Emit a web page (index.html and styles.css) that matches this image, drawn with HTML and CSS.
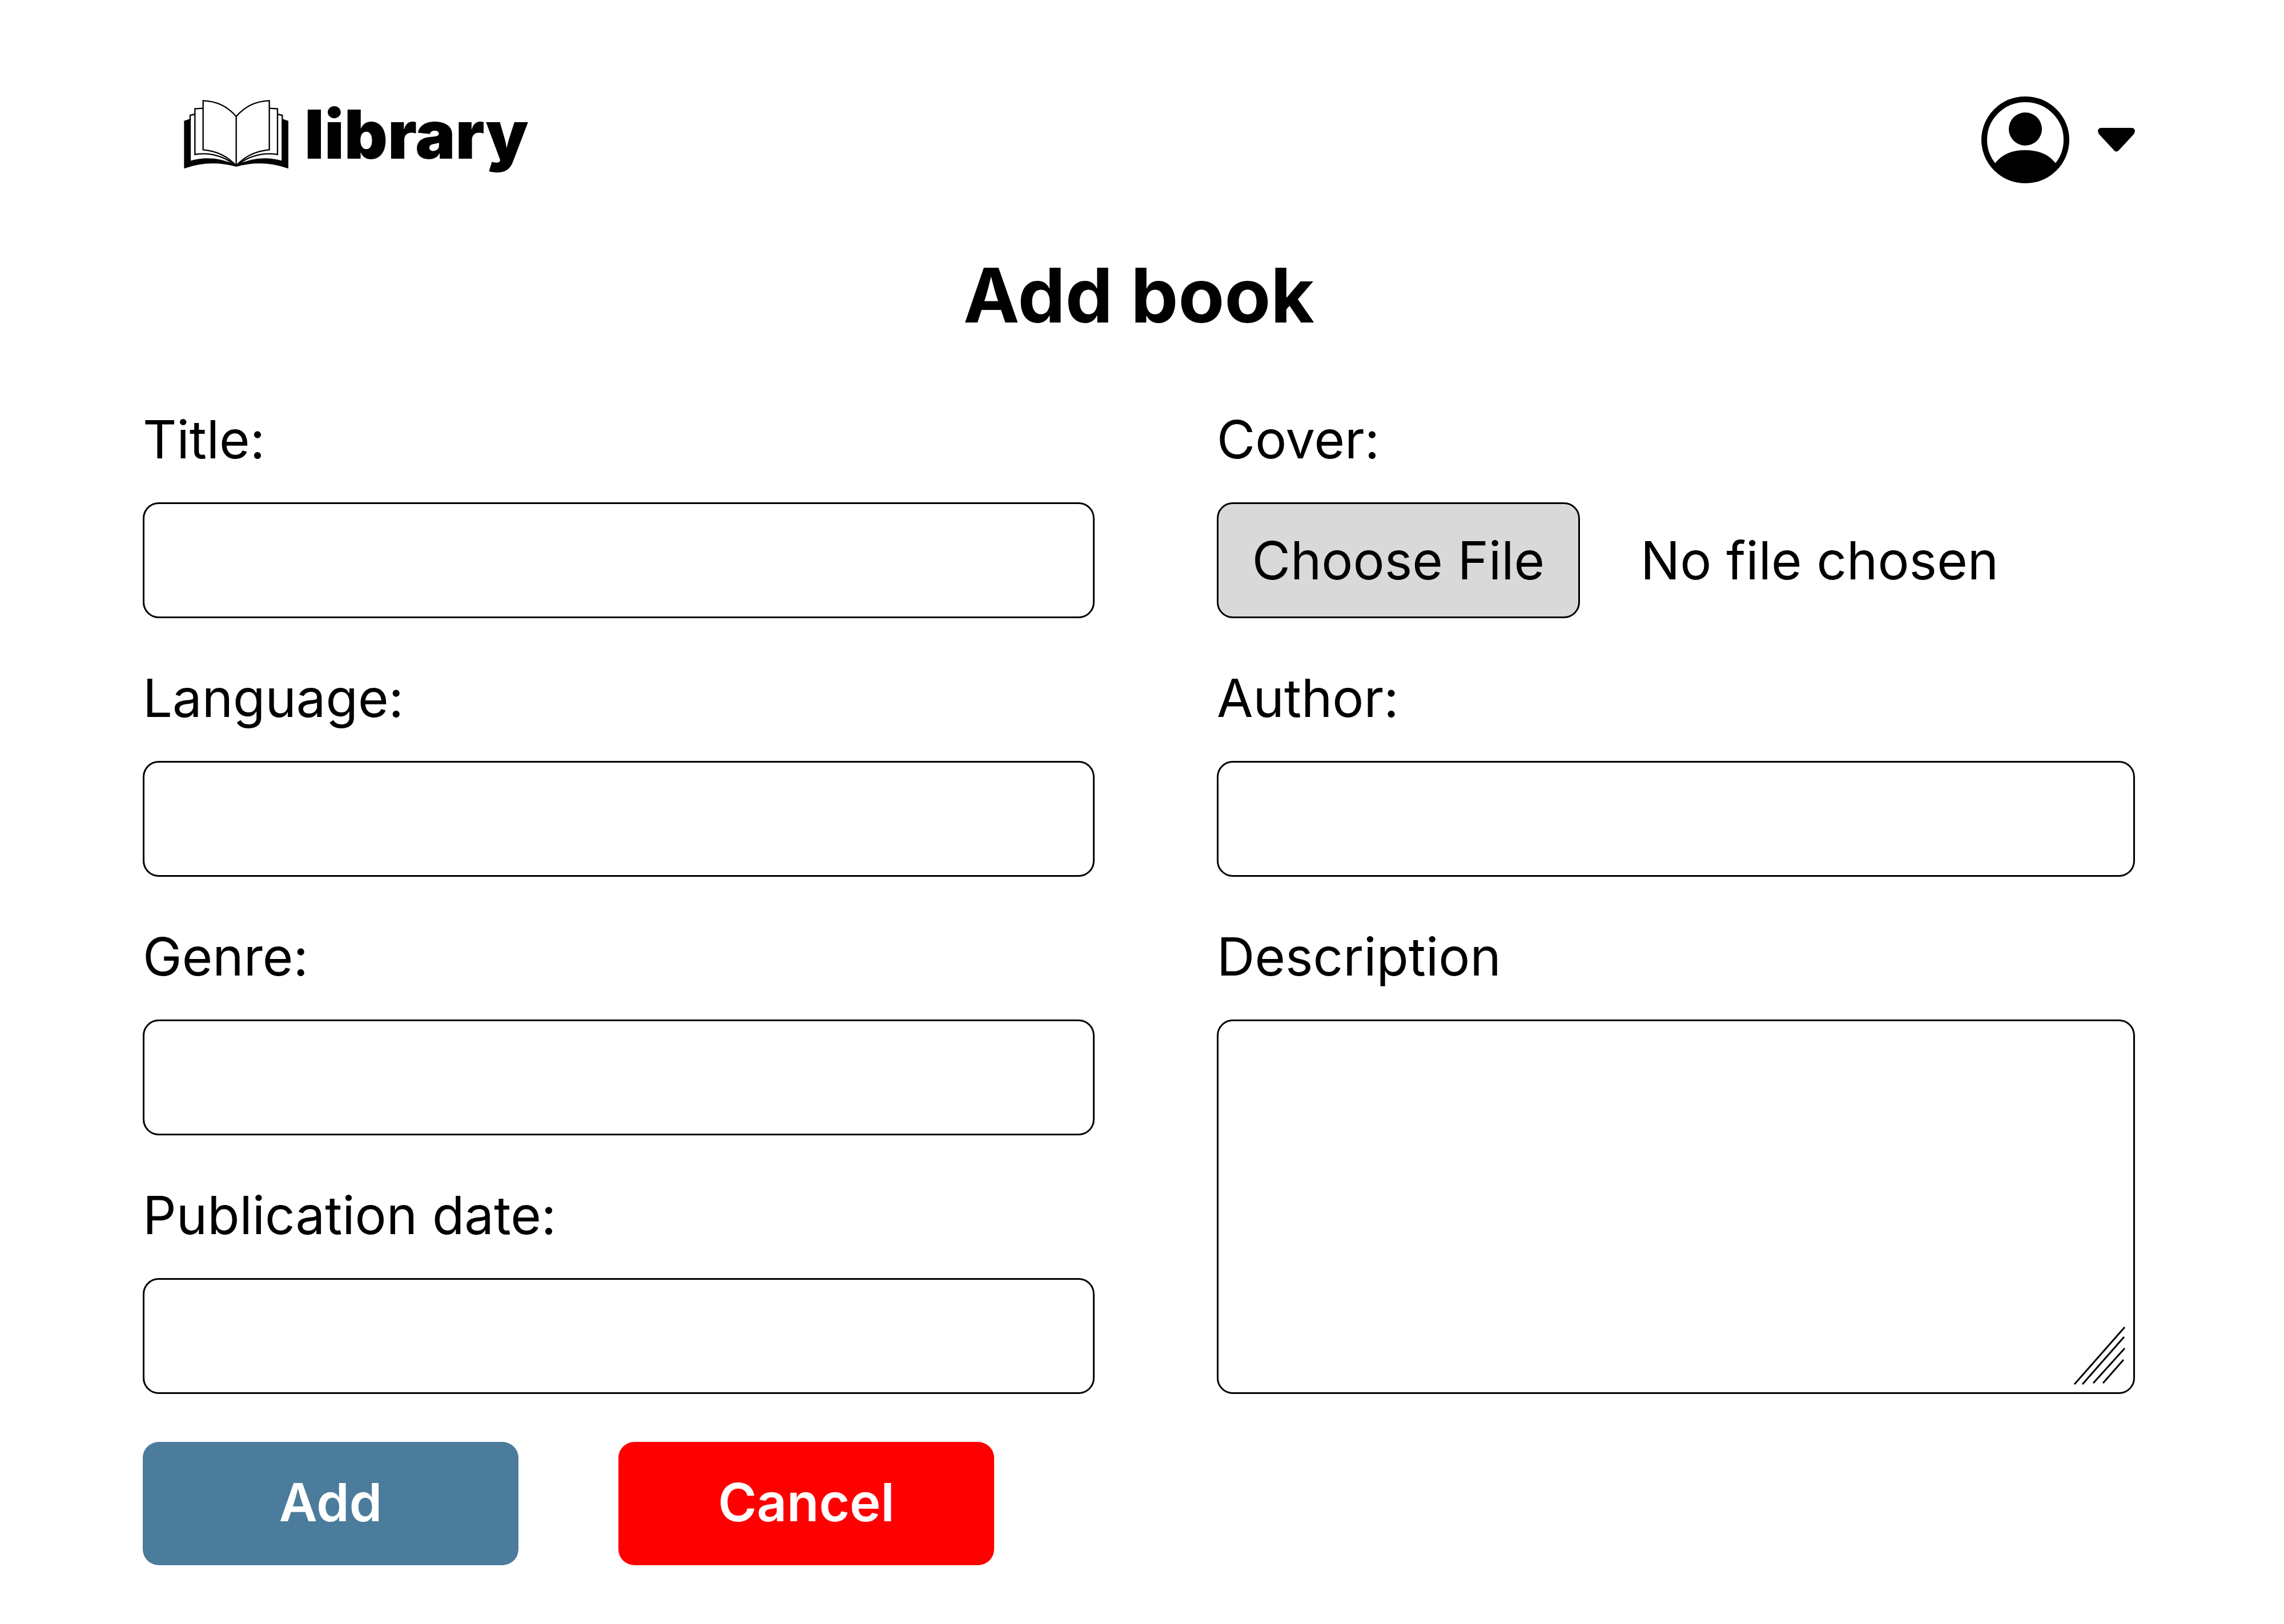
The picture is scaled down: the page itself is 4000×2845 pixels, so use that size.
FILE: index.html
```html
<!DOCTYPE html>
<html lang="en">
<head>
  <meta charset="utf-8">
  <meta name="viewport" content="width=device-width, initial-scale=1">
  <title>Add book</title>
  <link rel="stylesheet" href="styles.css">
</head>
<body>
  <header class="header">
    <a class="logo" href="#">
      <svg class="logo-mark" viewBox="36 28 549 363" aria-hidden="true">
        <path d="M37 138 L72 126 V352 Q180 318 311 372 Q442 318 550 352 V126 L585 138 V389 Q450 340 311 379 Q172 340 37 389Z"/>
        <g class="logo-pages">
          <path d="M94 103 L69 109 V352 Q190 316 311 374 Q432 316 553 352 V109 L528 103"/>
          <path d="M137 72 L94 75 V315 Q210 296 311 374 Q412 296 528 315 V75 L485 72"/>
          <path d="M311 115 Q242 35 137 32 V290 Q245 300 311 374 Q377 300 485 290 V32 Q380 35 311 115 V376"/>
        </g>
      </svg>
      <span class="logo-text">library</span>
    </a>
    <button class="account" type="button" aria-label="Account menu">
      <svg class="avatar" viewBox="0 0 154 152" aria-hidden="true">
        <ellipse class="avatar-ring" cx="77" cy="76" rx="72" ry="71"/>
        <circle cx="77" cy="57" r="29"/>
        <path d="M24 117 C36 101 54 94 77 94 C100 94 118 101 130 117 L136 121 C121 141 101 151 77 151 C53 151 33 141 18 121Z"/>
      </svg>
      <svg class="caret" viewBox="0 0 65 42" aria-hidden="true">
        <path d="M6 0 H59 Q63 0 65 4 Q65 8 63 11 L37 39 Q32 44 28 39 L2 11 Q0 8 0 4 Q2 0 6 0Z"/>
      </svg>
    </button>
  </header>

  <main class="main">
    <h1 class="title">Add book</h1>
    <form class="form">
      <div class="fields">
        <div class="field">
          <label for="title">Title:</label>
          <input class="box" id="title" type="text">
        </div>
        <div class="field">
          <label for="cover">Cover:</label>
          <input class="file" id="cover" type="file">
        </div>
        <div class="field">
          <label for="language">Language:</label>
          <input class="box" id="language" type="text">
        </div>
        <div class="field">
          <label for="author">Author:</label>
          <input class="box" id="author" type="text">
        </div>
        <div class="field">
          <label for="genre">Genre:</label>
          <input class="box" id="genre" type="text">
        </div>
        <div class="field field-tall">
          <label for="description">Description</label>
          <div class="area">
            <textarea class="box" id="description"></textarea>
            <svg class="grip" viewBox="70 42 94 104" aria-hidden="true">
              <path d="M73 144 161 44M87 144 160 61M106 142 161 81M123 142 159 101"/>
            </svg>
          </div>
        </div>
        <div class="field">
          <label for="date">Publication date:</label>
          <input class="box" id="date" type="text">
        </div>
      </div>
      <div class="actions">
        <button class="button button-add" type="submit">Add</button>
        <button class="button button-cancel" type="button">Cancel</button>
      </div>
    </form>
  </main>
</body>
</html>
```
FILE: styles.css
```css
* {
  box-sizing: border-box;
}

body {
  margin: 0;
  padding: 169px 261px 104px 250px;
  background: #fff;
  color: #000;
  font-family: Inter, "Liberation Sans", sans-serif;
  font-size: 92px;
  line-height: 116px;
}

.header {
  display: flex;
  justify-content: space-between;
  align-items: center;
  margin-bottom: 118px;
}

.logo {
  display: flex;
  align-items: center;
  gap: 28px;
  margin: 0 0 20px 72px;
  color: inherit;
  text-decoration: none;
}

.logo-mark {
  width: 183px;
  height: 121px;
}

.logo-pages {
  fill: #fff;
  stroke: #000;
  stroke-width: 7;
}

.logo-text {
  font-size: 118px;
  font-weight: 900;
  line-height: 120px;
}

.account {
  display: flex;
  align-items: center;
  gap: 50px;
  padding: 0;
  border: 0;
  background: none;
}

.avatar {
  width: 154px;
  height: 152px;
}

.avatar-ring {
  fill: none;
  stroke: #000;
  stroke-width: 10;
}

.caret {
  width: 65px;
  height: 42px;
}

.title {
  margin: 0 0 117px;
  font-size: 132px;
  font-weight: 700;
  line-height: 156px;
  text-align: center;
}

.fields {
  display: grid;
  grid-template-columns: 1667fr 1608fr;
  gap: 82px 214px;
}

.field {
  display: flex;
  flex-direction: column;
  gap: 52px;
  min-width: 0;
}

.field-tall {
  grid-row: span 2;
}

.box {
  width: 100%;
  height: 203px;
  padding: 0 40px;
  border: 3px solid #000;
  border-radius: 28px;
  background: #fff;
  color: inherit;
  font: inherit;
}

.area {
  position: relative;
  display: flex;
  flex: 1;
}

.area .box {
  height: auto;
  padding: 40px;
  resize: none;
}

.grip {
  position: absolute;
  right: 15px;
  bottom: 15px;
  width: 94px;
  height: 104px;
  fill: none;
  stroke: #000;
  stroke-width: 3;
  pointer-events: none;
}

.file {
  width: 100%;
  height: 203px;
  color: inherit;
  font: inherit;
}

.file::file-selector-button {
  width: 636px;
  height: 203px;
  margin: 0 106px 0 0;
  padding: 0;
  border: 3px solid #000;
  border-radius: 28px;
  background: #d9d9d9;
  color: inherit;
  font: inherit;
}

.actions {
  display: flex;
  flex-wrap: wrap;
  gap: 82px 175px;
  margin-top: 84px;
}

.button {
  width: 658px;
  height: 216px;
  padding: 0 0 4px;
  border: 0;
  border-radius: 28px;
  color: #fff;
  font: inherit;
  font-weight: 600;
}

.button-add {
  background: #4b7c9c;
}

.button-cancel {
  background: #f00;
}
```
